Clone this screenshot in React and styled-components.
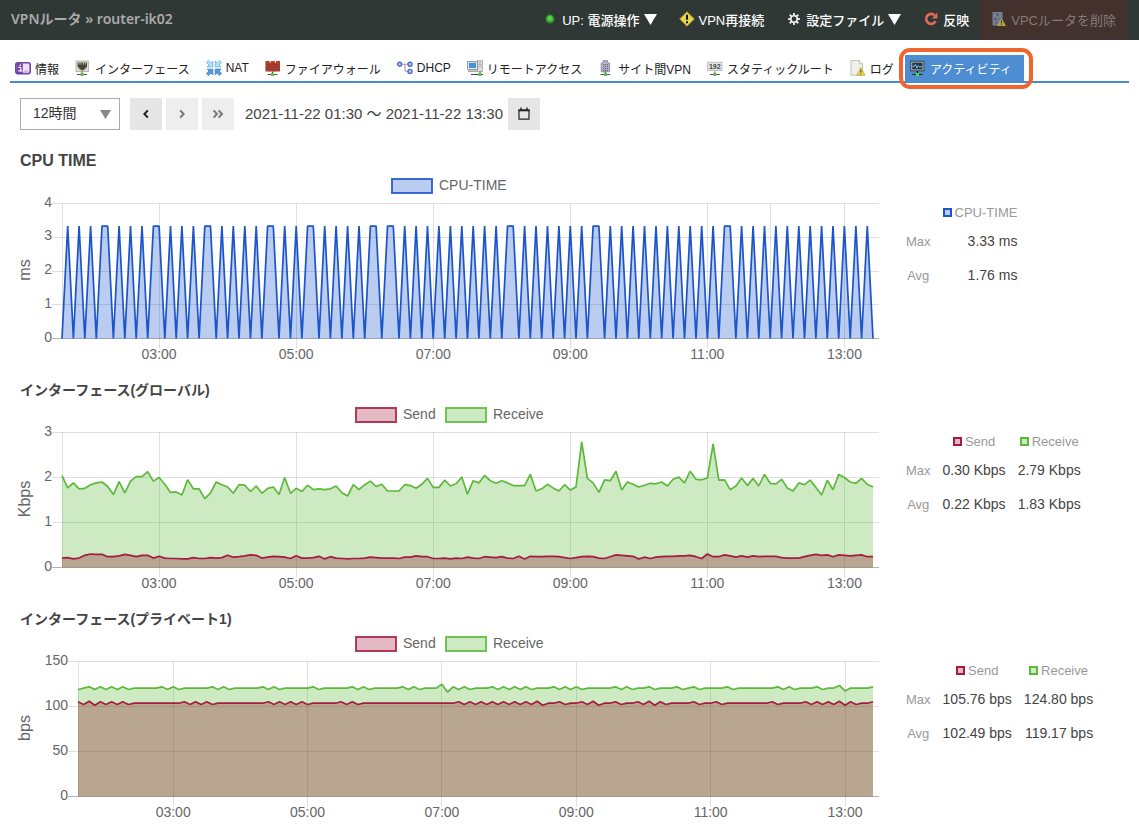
import React, { useState } from 'react';
import styled, { createGlobalStyle } from 'styled-components';

const GlobalStyle = createGlobalStyle`
  * {
    box-sizing: border-box;
  }

  body {
    margin: 0;
    background: #fff;
    color: #444;
    font-family: 'Liberation Sans', 'Noto Sans CJK JP', sans-serif;
    font-size: 14px;
  }

  button, select {
    font-family: inherit;
  }
`;

const TopBar = styled.header`
  display: flex;
  justify-content: space-between;
  height: 40px;
  padding: 0 12px 0 11px;
  background: #2f3835;
`;

const Breadcrumb = styled.h1`
  margin: 0;
  color: #aaa;
  font-family: 'Noto Sans', 'Noto Sans CJK JP', sans-serif;
  font-size: 14px;
  font-weight: 600;
  line-height: 38px;
  white-space: nowrap;
`;

const Actions = styled.div`
  display: flex;
`;

const ActionButton = styled.button`
  display: flex;
  align-items: center;
  gap: 4px;
  height: 40px;
  padding: 0 11px 2px;
  border: none;
  background: ${({ $danger }) => ($danger ? '#43312e' : 'transparent')};
  color: ${({ $danger }) => ($danger ? '#857a77' : '#fff')};
  font-size: 13px;
  font-weight: ${({ $danger }) => ($danger ? 400 : 500)};
  white-space: nowrap;
  cursor: pointer;
`;

const Tabs = styled.nav`
  display: flex;
  gap: 6px;
  margin: 15px 10px 0;
  border-bottom: 2px solid #4a8bd0;
`;

const Tab = styled.a`
  position: relative;
  display: flex;
  align-items: center;
  gap: 4px;
  height: 26px;
  padding: ${({ $active }) => ($active ? '0 12px 0 5px' : '0 5px')};
  background: ${({ $active }) => ($active ? '#4d8dd1' : 'transparent')};
  color: ${({ $active }) => ($active ? '#fff' : '#222')};
  font-size: 12px;
  text-decoration: none;
  white-space: nowrap;
`;

const TabMarker = styled.span`
  position: absolute;
  inset: -7px -9px -8px -6px;
  border: 4px solid #ee6530;
  border-radius: 11px;
  pointer-events: none;
`;

const Toolbar = styled.div`
  display: flex;
  align-items: center;
  gap: 4px;
  padding: 15px 20px 0;
`;

const SelectBox = styled.label`
  position: relative;
  width: 100px;
  margin-right: 6px;

  svg {
    position: absolute;
    top: 12px;
    right: 9px;
    pointer-events: none;
  }
`;

const PeriodSelect = styled.select`
  display: block;
  width: 100%;
  height: 32px;
  padding: 0 12px 2px;
  border: 1px solid #aaa;
  border-radius: 0;
  background: #fff;
  color: #333;
  font-size: 14px;
  appearance: none;
`;

const IconButton = styled.button`
  display: flex;
  align-items: center;
  justify-content: center;
  width: 32px;
  height: 32px;
  padding: 0;
  border: none;
  background: ${({ $muted }) => ($muted ? '#eee' : '#e6e6e6')};
  color: ${({ $muted }) => ($muted ? '#777' : '#222')};
  cursor: pointer;
`;

const Range = styled.span`
  margin: 0 1px 0 7px;
  padding-bottom: 4px;
  font-size: 15px;
  white-space: nowrap;
`;

const Sections = styled.main`
  display: flex;
  flex-direction: column;
  gap: 11px;
  padding: 21px 20px 0;
`;

const SectionTitle = styled.h2`
  margin: 0;
  color: #444;
  font-size: ${({ $latin }) => ($latin ? '16px' : '14px')};
  font-weight: 700;
  line-height: 20px;
`;

const SectionBody = styled.div`
  display: grid;
  grid-template-columns: minmax(0, 1fr) 219px;
  gap: 20px;
`;

const ChartSvg = styled.svg`
  display: block;
  width: 100%;
  height: auto;
  overflow: visible;

  text {
    fill: #666;
    font-size: 14px;
  }
`;

const StatsTable = styled.table`
  justify-self: start;
  align-self: start;
  margin-top: 29px;
  border-collapse: collapse;
  white-space: nowrap;

  th, td {
    padding: 0 6px;
  }

  th {
    color: #999;
    font-size: 13px;
    font-weight: 400;
  }

  td {
    color: #444;
    font-size: 14px;
    text-align: right;
  }

  thead tr {
    height: 24px;
  }

  tbody tr {
    height: 34px;
  }
`;

const Swatch = styled.span`
  display: inline-block;
  width: 9px;
  height: 9px;
  margin-right: 3px;
  border: 2px solid ${({ $stroke }) => $stroke};
  background: ${({ $fill }) => $fill};
`;

/* ---------- icons ---------- */

const Icon = ({ children, size = 16 }) => (
  <svg width={size} height={size} viewBox="0 0 16 16" fill="none" aria-hidden="true">
    {children}
  </svg>
);

// network cable with a green node, shared by many icons
const NetNode = ({ x = 7 }) => (
  <g>
    <path d={`M${x - 5} 14.5h10`} stroke="#555" strokeWidth="1" />
    <path d={`M${x} 11.5v2`} stroke="#444" strokeWidth="1" />
    <rect x={x - 1.5} y="13" width="3" height="3" fill="#5fc23c" />
  </g>
);

const Warn = ({ x = 7, y = 7 }) => (
  <g transform={`translate(${x} ${y})`}>
    <path d="M4.5.6 8.6 8.4H.4z" fill="#f3dc4d" stroke="#b99a2b" strokeWidth=".7" />
    <path d="M4.5 3v2.8M4.5 6.5v1" stroke="#333" strokeWidth="1" />
  </g>
);

const StatusIcon = () => (
  <Icon>
    <circle cx="8" cy="8" r="4.4" fill="#2f9a2c" />
    <circle cx="8" cy="7.4" r="2.6" fill="#5cc94c" />
  </Icon>
);

const ReconnectIcon = () => (
  <Icon>
    <path d="M8 .7 15.3 8 8 15.3.7 8z" fill="#e6d64e" stroke="#a89530" strokeWidth="1" strokeLinejoin="round" />
    <path d="M8 3.8v5M8 10.3v1.9" stroke="#111" strokeWidth="2" />
  </Icon>
);

const GearIcon = () => (
  <Icon>
    <circle cx="8" cy="8" r="3.2" stroke="#eee" strokeWidth="1.6" />
    {[0, 45, 90, 135, 180, 225, 270, 315].map((a) => (
      <path key={a} d="M8 4.6V2" stroke="#eee" strokeWidth="1.8" transform={`rotate(${a} 8 8)`} />
    ))}
  </Icon>
);

const ReloadIcon = () => (
  <Icon>
    <path d="M11.6 4.2A5 5 0 1 0 12.6 10.2" stroke="#e4695d" strokeWidth="2.6" />
    <path d="M14.4 1.6v5.8H8.8z" fill="#e4695d" />
  </Icon>
);

const DeleteIcon = () => (
  <Icon>
    <path d="M1.5 1h10v13.5h-10z" fill="#767f8c" />
    <path d="M6.5 2.2v3M5 3.7h3M3 8h3M4.5 6.5v3M4 11.8h3M8 8.2h2.6" stroke="#3d5789" strokeWidth="1.1" />
    <path d="M10.5 7 15 15H6z" fill="#b5a246" />
    <path d="M10.5 9.5v3M10.5 13.2v1" stroke="#3b3320" strokeWidth="1" />
  </Icon>
);

const InfoIcon = () => (
  <Icon>
    <rect x=".8" y="2.8" width="14.4" height="10.8" rx="2" fill="#ece2f5" stroke="#7343a3" strokeWidth="1.6" />
    <path d="M1.4 3.2h6.4v10H1.4z" fill="#70419f" />
    <path d="M3.4 7.4h2.4v3.2M3.2 10.9h4.2" stroke="#fff" strokeWidth="1.1" />
    <path d="M4.6 4.6h1.4V6H4.6z" fill="#fff" />
    <path d="M13 11.2H9.2" stroke="#b79bd2" strokeWidth="1" />
  </Icon>
);

const InterfaceIcon = () => (
  <Icon>
    <rect x="1" y="1" width="12.5" height="10.6" fill="#dcdcdc" stroke="#aaa" strokeWidth=".8" />
    <path d="M2.6 2.6h9.4v5h-1.6v1.6H8.9v1H5.7v-1H4.2V7.6H2.6z" fill="#4a463a" />
    <path d="M4 2.6v2M6 2.6v2M8.4 2.6v2M10.4 2.6v2" stroke="#dcc98a" strokeWidth=".9" />
    <NetNode />
  </Icon>
);

const NatArrow = ({ angle, fill, stroke }) => (
  <path
    d="M2.4.4 4.9 2.9 6.8 1.2V6.9H1.1L2.9 5 .4 2.4z"
    fill={fill}
    stroke={stroke}
    strokeWidth=".7"
    transform={`rotate(${angle} 8 8)`}
  />
);

const NatIcon = () => (
  <Icon>
    <NatArrow angle={0} fill="#b4e0f8" stroke="#5aa5d8" />
    <NatArrow angle={90} fill="#b4e0f8" stroke="#5aa5d8" />
    <NatArrow angle={180} fill="#4f9fe0" stroke="#2f74ba" />
    <NatArrow angle={270} fill="#4f9fe0" stroke="#2f74ba" />
  </Icon>
);

const FirewallIcon = () => (
  <Icon>
    <path d="M.5 1h4v1.6h1.3V1h4v1.6H11V1h4v10.6H.5z" fill="#b2412f" />
    <path d="M.5 4.4H15M.5 6.8H15M.5 9.2H15M4 4.4v2.4M8 2.6v1.8M10.5 4.4v2.4M2.5 6.8v2.4M7 6.8v2.4M12.5 6.8v2.4M4.5 9.2v2.4M9.5 9.2v2.4" stroke="#8a3529" strokeWidth=".7" />
    <NetNode x={7.5} />
  </Icon>
);

const DhcpIcon = () => (
  <Icon>
    <path d="M5 4.2h6M8 4.2v7h3" stroke="#999" strokeWidth="1" />
    {[[2.6, 4.2], [13, 4.2], [13, 11.4]].map(([x, y]) => (
      <circle key={`${x}-${y}`} cx={x} cy={y} r="2" fill="#b9c8f4" stroke="#4e6cc9" strokeWidth="1.4" />
    ))}
  </Icon>
);

const RemoteIcon = () => (
  <Icon>
    <rect x="10.4" y=".6" width="5.2" height="11" fill="#dfdfdf" stroke="#aaa" strokeWidth=".8" />
    <path d="M11.5 2.6h3M11.5 4.6h3M11.5 6.6h3" stroke="#999" strokeWidth=".7" />
    <rect x=".6" y="1.4" width="9.8" height="8" fill="#e9e9e9" stroke="#888" strokeWidth=".8" />
    <rect x="2" y="2.8" width="7" height="5.2" fill="#4393d8" />
    <path d="M1 11.2h9" stroke="#aaa" strokeWidth="1.8" />
    <path d="M4 14.5h12" stroke="#444" strokeWidth="1" />
    <path d="M13 11.5v2" stroke="#444" strokeWidth="1" />
    <rect x="11.5" y="13" width="3" height="3" fill="#5fc23c" />
  </Icon>
);

const BuildingIcon = () => (
  <Icon>
    <path d="M3.2 11.8V3.2l2-1V.6h4.2v1.6l2.2 1v8.6z" fill="#b3b3c6" stroke="#80809a" strokeWidth=".8" />
    <path d="M5 4.6h5M5 6.6h5M5 8.6h5M5 10.4h5" stroke="#606080" strokeWidth="1" strokeDasharray="1.2 .8" />
    <NetNode x={7.4} />
  </Icon>
);

const RouteIcon = () => (
  <Icon>
    <rect x=".6" y="2.2" width="14.4" height="8.4" fill="#e4e4e4" stroke="#b5b5b5" strokeWidth=".8" />
    <text x="7.8" y="8.8" textAnchor="middle" fontSize="7" fontWeight="700" fill="#444">192</text>
    <NetNode x={7.8} />
  </Icon>
);

const LogIcon = () => (
  <Icon>
    <path d="M1 .6h8.4l3.2 3.2v11.4H1z" fill="#edf3ec" stroke="#a9b5ab" strokeWidth=".8" />
    <path d="M9.4.6v3.2h3.2" fill="#fff" stroke="#a9b5ab" strokeWidth=".8" />
    <Warn x={6.4} y={6.8} />
  </Icon>
);

const ActivityIcon = () => (
  <Icon>
    <rect x=".9" y="1.2" width="13" height="9.6" fill="#d9d9d9" stroke="#222" strokeWidth=".8" />
    <rect x="2.2" y="2.5" width="10.4" height="7" fill="#20354a" />
    <path d="M2.6 6.4h1.8l1-2 1.5 3.8 1.4-2.6 1 1.2h3" stroke="#8fd0e8" strokeWidth=".9" />
    <path d="M2.4 14.5h10" stroke="#222" strokeWidth="1.2" />
    <path d="M7.4 11v2.4" stroke="#111" strokeWidth="1.4" />
    <rect x="5.8" y="13" width="3.2" height="3" fill="#3be03b" />
  </Icon>
);

const DownArrow = ({ width, height, color }) => (
  <svg width={width} height={height} viewBox="0 0 12 12" preserveAspectRatio="none" aria-hidden="true">
    <path d="M0 0h12L6 12z" fill={color} />
  </svg>
);

const Chevron = ({ d }) => (
  <Icon>
    <path d={d} stroke="currentColor" strokeWidth="2" />
  </Icon>
);

const CalendarIcon = () => (
  <Icon>
    <path d="M3 4h10v9.2H3z" stroke="currentColor" strokeWidth="1.2" />
    <path d="M2.4 4.4h11.2" stroke="currentColor" strokeWidth="1.8" />
    <path d="M5 1.6v3M11 1.6v3" stroke="currentColor" strokeWidth="1.4" />
  </Icon>
);

/* ---------- data ---------- */

const BLUE = { stroke: '#1b55c9', fill: 'rgba(27, 85, 201, 0.3)' };
const RED = { stroke: '#a51c3f', fill: 'rgba(160, 24, 60, 0.3)', area: 'rgba(145, 35, 48, 0.34)' };
const GREEN = { stroke: '#5db83b', fill: 'rgba(88, 184, 52, 0.3)' };

// one sample every 5 minutes, 01:35 - 13:25
const SAMPLES = 143;

const CPU_PEAKS = [
  1, 3, 5, 7, 8, 10, 12, 14, 16, 17, 19, 21, 23, 25, 26, 28, 30, 32, 34, 36, 37, 39, 41, 43, 44,
  46, 48, 50, 52, 54, 55, 57, 58, 60, 62, 64, 66, 68, 70, 72, 74, 76, 78, 79, 81, 83, 85, 87, 89,
  91, 93, 94, 96, 98, 100, 102, 104, 106, 108, 110, 112, 114, 116, 117, 119, 121, 123, 125, 127,
  129, 131, 133, 135, 137, 139, 141,
];
const cpuTime = Array.from({ length: SAMPLES }, (_, i) => (CPU_PEAKS.includes(i) ? 3.33 : 0));

const globalReceive = [
  2.04, 1.77, 1.88, 1.75, 1.76, 1.84, 1.88, 1.9, 1.8, 1.62, 1.91, 1.66, 1.92, 2.02, 2.02, 2.13,
  1.92, 2.0, 1.85, 1.67, 1.68, 1.61, 1.95, 1.75, 1.75, 1.53, 1.66, 1.9, 1.84, 1.79, 1.65, 1.84,
  1.83, 1.69, 1.81, 1.65, 1.76, 1.79, 1.62, 2.0, 1.65, 1.76, 1.69, 1.83, 1.73, 1.75, 1.73, 1.75,
  1.81, 1.66, 1.59, 1.84, 1.73, 1.84, 1.92, 1.8, 1.85, 1.7, 1.7, 1.7, 1.84, 1.82, 1.76, 1.85,
  1.98, 1.78, 1.78, 1.94, 1.81, 1.86, 2.01, 1.63, 1.93, 1.88, 2.05, 1.93, 1.87, 1.93, 1.88, 1.82,
  1.82, 1.82, 2.07, 1.7, 1.75, 1.85, 1.77, 1.7, 1.84, 1.72, 1.79, 2.79, 1.98, 1.88, 1.67, 1.95,
  1.93, 2.14, 1.72, 1.9, 1.85, 1.79, 1.83, 1.87, 1.86, 1.9, 1.81, 1.96, 2.01, 1.88, 2.14, 1.96,
  1.95, 1.99, 2.75, 1.94, 1.95, 1.73, 1.81, 1.99, 1.82, 1.98, 1.81, 2.07, 1.87, 1.86, 1.96, 1.77,
  1.7, 1.88, 1.84, 1.94, 1.78, 1.61, 1.94, 1.73, 2.07, 2.0, 1.9, 1.87, 1.98, 1.85, 1.79,
];

const globalSend = [
  0.21, 0.22, 0.19, 0.21, 0.27, 0.3, 0.29, 0.29, 0.24, 0.24, 0.26, 0.29, 0.27, 0.24, 0.27, 0.27,
  0.21, 0.25, 0.21, 0.2, 0.2, 0.19, 0.19, 0.22, 0.2, 0.2, 0.22, 0.21, 0.22, 0.27, 0.23, 0.24,
  0.26, 0.28, 0.27, 0.21, 0.23, 0.25, 0.24, 0.23, 0.2, 0.26, 0.21, 0.21, 0.22, 0.25, 0.19, 0.24,
  0.21, 0.2, 0.19, 0.2, 0.2, 0.21, 0.23, 0.22, 0.21, 0.21, 0.21, 0.2, 0.23, 0.23, 0.26, 0.24,
  0.24, 0.2, 0.2, 0.21, 0.19, 0.21, 0.2, 0.23, 0.21, 0.2, 0.24, 0.23, 0.22, 0.24, 0.21, 0.2,
  0.25, 0.19, 0.25, 0.24, 0.24, 0.25, 0.25, 0.24, 0.22, 0.2, 0.22, 0.24, 0.25, 0.24, 0.21, 0.2,
  0.24, 0.28, 0.27, 0.26, 0.25, 0.19, 0.23, 0.2, 0.23, 0.24, 0.25, 0.25, 0.26, 0.26, 0.27, 0.24,
  0.2, 0.3, 0.24, 0.24, 0.28, 0.26, 0.23, 0.26, 0.23, 0.26, 0.24, 0.25, 0.25, 0.25, 0.22, 0.21,
  0.21, 0.21, 0.24, 0.27, 0.29, 0.27, 0.28, 0.24, 0.28, 0.27, 0.26, 0.27, 0.28, 0.24, 0.24,
];

// steady traffic where each bump is followed by an equal dip
const steady = (base, bumps, extra) => {
  const values = Array(SAMPLES).fill(base);
  bumps.forEach((i) => {
    values[i] = base + 1.5;
    if (i + 1 < SAMPLES) values[i + 1] = base - 1.5;
  });
  Object.entries(extra).forEach(([i, v]) => {
    values[i] = v;
  });
  return values;
};

const privateReceive = steady(
  120.4,
  [2, 4, 6, 8, 15, 17, 24, 26, 33, 35, 42, 49, 51, 58, 60, 67, 69, 74, 76, 78, 80, 85, 87, 89, 96,
    98, 102, 107, 110, 116, 125, 127, 132, 142],
  { 0: 118.9, 65: 124.8, 66: 116, 136: 123.4, 137: 117.3 },
);

const privateSend = steady(
  103.7,
  [0, 4, 6, 8, 19, 21, 23, 34, 36, 38, 40, 47, 49, 68, 70, 72, 74, 76, 78, 80, 86, 90, 96, 100,
    104, 110, 114, 124, 130, 132, 134, 138, 142],
  {
    2: 105.76, 3: 101.3, 82: 105.76, 83: 101.3, 92: 105.76, 93: 101.3, 102: 105.76, 103: 101.3,
    136: 105.76, 137: 101.3,
  },
);

const SECTIONS = [
  {
    title: 'CPU TIME',
    latin: true,
    unit: 'ms',
    ticks: [0, 1, 2, 3, 4],
    left: 42,
    extraLine: 750.5,
    series: [{ name: 'CPU-TIME', color: BLUE, values: cpuTime, max: '3.33 ms', avg: '1.76 ms', legendX: 371 }],
  },
  {
    title: 'インターフェース(グローバル)',
    unit: 'Kbps',
    ticks: [0, 1, 2, 3],
    left: 42,
    series: [
      { name: 'Send', color: RED, values: globalSend, max: '0.30 Kbps', avg: '0.22 Kbps', legendX: 335 },
      { name: 'Receive', color: GREEN, values: globalReceive, max: '2.79 Kbps', avg: '1.83 Kbps', legendX: 425 },
    ],
  },
  {
    title: 'インターフェース(プライベート1)',
    unit: 'bps',
    ticks: [0, 50, 100, 150],
    left: 58,
    series: [
      { name: 'Send', color: RED, values: privateSend, max: '105.76 bps', avg: '102.49 bps', legendX: 335 },
      { name: 'Receive', color: GREEN, values: privateReceive, max: '124.80 bps', avg: '119.17 bps', legendX: 425 },
    ],
  },
];

const TABS = [
  ['情報', InfoIcon],
  ['インターフェース', InterfaceIcon],
  ['NAT', NatIcon],
  ['ファイアウォール', FirewallIcon],
  ['DHCP', DhcpIcon],
  ['リモートアクセス', RemoteIcon],
  ['サイト間VPN', BuildingIcon],
  ['スタティックルート', RouteIcon],
  ['ログ', LogIcon],
  ['アクティビティ', ActivityIcon],
];

/* ---------- chart ---------- */

const TOP = 32.5;
const BOTTOM = 167.5;
const RIGHT = 853;
const HOURS = ['03:00', '05:00', '07:00', '09:00', '11:00', '13:00'];

const Chart = ({ title, unit, ticks, left, series, extraLine }) => {
  const step = (RIGHT - left) / (SAMPLES - 1);
  const x = (i) => left + i * step;
  const y = (v) => BOTTOM - (v / ticks[ticks.length - 1]) * (BOTTOM - TOP);
  const crisp = (v) => Math.floor(v) + 0.5;

  return (
    <ChartSvg viewBox="0 0 860 198" role="img" aria-label={title}>
      {series.map(({ name, color, legendX }) => (
        <g key={name}>
          <rect x={legendX + 1} y="8" width="40" height="14" fill={color.fill} stroke={color.stroke} strokeWidth="2" strokeOpacity=".85" />
          <text x={legendX + 48} y="19">{name}</text>
        </g>
      ))}
      <text transform="translate(10 99) rotate(-90)" textAnchor="middle" style={{ fontSize: 16 }}>{unit}</text>

      {ticks.map((t) => (
        <g key={t}>
          <path
            d={`M${left - 10} ${crisp(y(t))}H859`}
            stroke={t === 0 ? 'rgba(0,0,0,0.3)' : 'rgba(0,0,0,0.12)'}
          />
          <text x={left - 10} y={Math.round(y(t)) + 3} textAnchor="end">{t}</text>
        </g>
      ))}
      <path d={`M${left + 0.5} ${TOP}V${BOTTOM}`} stroke="rgba(0,0,0,0.12)" />
      {extraLine && <path d={`M${extraLine} ${TOP}V${BOTTOM}`} stroke="rgba(0,0,0,0.12)" />}
      {HOURS.map((h, i) => {
        const hx = x(17 + i * 24);
        return (
          <g key={h}>
            <path d={`M${crisp(hx)} ${TOP}V${BOTTOM + 10}`} stroke="rgba(0,0,0,0.12)" />
            <text x={hx} y="188" textAnchor="middle">{h}</text>
          </g>
        );
      })}

      {[...series].reverse().map(({ name, color, values }) => {
        const points = values.map((v, i) => `${x(i).toFixed(1)},${y(v).toFixed(1)}`).join(' ');
        return (
          <g key={name}>
            <polygon points={`${left},${BOTTOM} ${points} ${RIGHT},${BOTTOM}`} fill={color.area || color.fill} />
            <polyline points={points} fill="none" stroke={color.stroke} strokeWidth="1.7" strokeLinejoin="bevel" />
          </g>
        );
      })}
    </ChartSvg>
  );
};

const Stats = ({ series }) => (
  <StatsTable>
    <thead>
      <tr>
        <td />
        {series.map(({ name, color }) => (
          <th key={name} scope="col">
            <Swatch $stroke={color.stroke} $fill={color.fill} />
            {name}
          </th>
        ))}
      </tr>
    </thead>
    <tbody>
      <tr>
        <th scope="row">Max</th>
        {series.map(({ name, max }) => <td key={name}>{max}</td>)}
      </tr>
      <tr>
        <th scope="row">Avg</th>
        {series.map(({ name, avg }) => <td key={name}>{avg}</td>)}
      </tr>
    </tbody>
  </StatsTable>
);

const App = () => {
  const [period, setPeriod] = useState('12h');

  return (
    <>
      <GlobalStyle />
      <TopBar>
        <Breadcrumb>VPNルータ » router-ik02</Breadcrumb>
        <Actions>
          <ActionButton type="button">
            <StatusIcon />
            UP: 電源操作
            <DownArrow width={13} height={11} color="#fff" />
          </ActionButton>
          <ActionButton type="button">
            <ReconnectIcon />
            VPN再接続
          </ActionButton>
          <ActionButton type="button">
            <GearIcon />
            設定ファイル
            <DownArrow width={13} height={11} color="#fff" />
          </ActionButton>
          <ActionButton type="button">
            <ReloadIcon />
            反映
          </ActionButton>
          <ActionButton type="button" $danger>
            <DeleteIcon />
            VPCルータを削除
          </ActionButton>
        </Actions>
      </TopBar>

      <Tabs>
        {TABS.map(([label, TabIcon]) => {
          const active = label === 'アクティビティ';
          return (
            <Tab key={label} href="#" $active={active} aria-current={active ? 'page' : undefined}>
              <TabIcon />
              {label}
              {active && <TabMarker />}
            </Tab>
          );
        })}
      </Tabs>

      <Toolbar>
        <SelectBox>
          <PeriodSelect aria-label="表示期間" value={period} onChange={(e) => setPeriod(e.target.value)}>
            <option value="12h">12時間</option>
          </PeriodSelect>
          <DownArrow width={11} height={9} color="#888" />
        </SelectBox>
        <IconButton type="button" aria-label="前へ">
          <Chevron d="M9.8 4.4 6.4 8l3.4 3.6" />
        </IconButton>
        <IconButton type="button" aria-label="次へ" $muted>
          <Chevron d="M6.2 4.4 9.6 8l-3.4 3.6" />
        </IconButton>
        <IconButton type="button" aria-label="最新" $muted>
          <Chevron d="M3.6 4.4 7 8l-3.4 3.6M8.6 4.4 12 8l-3.4 3.6" />
        </IconButton>
        <Range>2021-11-22 01:30 〜 2021-11-22 13:30</Range>
        <IconButton type="button" aria-label="日付を選択">
          <CalendarIcon />
        </IconButton>
      </Toolbar>

      <Sections>
        {SECTIONS.map((section) => (
          <section key={section.title}>
            <SectionTitle $latin={section.latin}>{section.title}</SectionTitle>
            <SectionBody>
              <Chart {...section} />
              <Stats series={section.series} />
            </SectionBody>
          </section>
        ))}
      </Sections>
    </>
  );
};

export default App;
